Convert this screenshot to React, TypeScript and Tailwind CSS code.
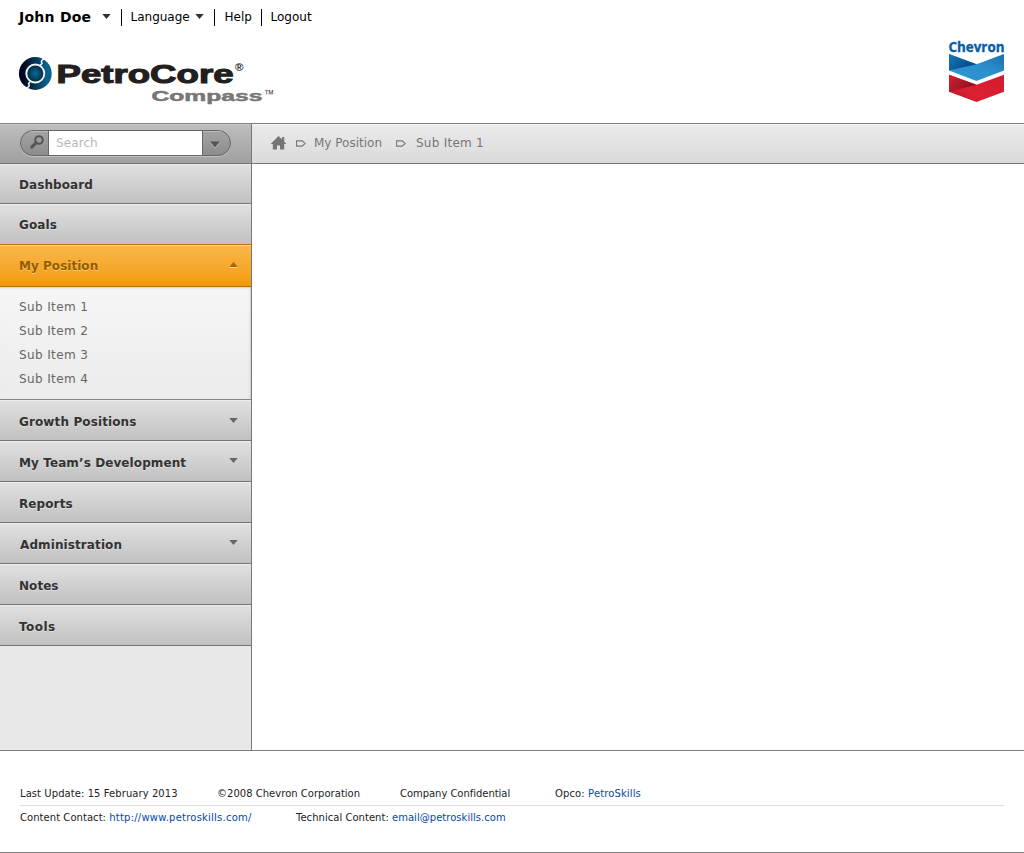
import React from "react";

type NavEntry = { label: string; arrow?: boolean; tracking?: string; height: string; nudge?: string };

const topEntries: NavEntry[] = [
  { label: "Dashboard", height: "h-10 pt-0.5", tracking: "tracking-[0.08px]" },
  { label: "Goals", height: "h-[41px] pt-px", tracking: "tracking-[0.1px]" },
];

const lowerEntries: NavEntry[] = [
  { label: "Growth Positions", arrow: true, tracking: "tracking-[0.12px]", height: "h-[41px] pt-1" },
  { label: "My Team’s Development", arrow: true, tracking: "tracking-[0.1px]", height: "h-[41px] pt-1", nudge: "mb-[5px]" },
  { label: "Reports", height: "h-[41px] pt-1", tracking: "tracking-[0.1px]" },
  { label: "Administration", arrow: true, height: "h-[41px] pt-1", tracking: "tracking-[0.1px] pl-px", nudge: "mb-[5px]" },
  { label: "Notes", height: "h-[41px] pt-1", tracking: "tracking-[0.05px]" },
  { label: "Tools", height: "h-[41px] pt-1", tracking: "tracking-[0.45px]" },
];

const subItems = ["Sub Item 1", "Sub Item 2", "Sub Item 3", "Sub Item 4"];

function Caret({ className }: { className: string }) {
  return (
    <svg width="9" height="5" viewBox="0 0 9 5" className={`shrink-0 ${className}`}>
      <path d="M0.3 0h8.4L4.5 5z" fill="currentColor" />
    </svg>
  );
}

function Pennant({ className }: { className: string }) {
  return (
    <svg width="10" height="7" viewBox="0 0 10 7" className={`shrink-0 text-[#777] ${className}`}>
      <path d="M0.5 0.9h5.7L9.2 3.5 6.2 6.1H0.5z" fill="none" stroke="currentColor" strokeWidth="1.1" />
    </svg>
  );
}

function NavRow({ label, arrow, tracking = "", height, nudge = "" }: NavEntry) {
  return (
    <a
      className={`flex ${height} items-center justify-between border-b border-[#747474] bg-linear-to-b from-[#e1e1e1] to-[#c1c1c1] pl-[19px] pr-[13px] shadow-[inset_0_1px_0_#ececec]`}
    >
      <span className={`text-[12px] font-bold leading-4 text-[#333] [text-shadow:0_1px_0_#ddd] ${tracking}`}>{label}</span>
      {arrow && <Caret className={`text-[#666] ${nudge || "mb-[3px]"}`} />}
    </a>
  );
}

function PetroCoreLogo() {
  return (
    <svg width="260" height="54" viewBox="18 54 260 54" className="block">
      <defs>
        <linearGradient id="rim" x1="0" y1="0.5" x2="1" y2="0.5">
          <stop offset="0.1" stopColor="#02051d" />
          <stop offset="0.5" stopColor="#073653" />
          <stop offset="0.85" stopColor="#08618e" />
        </linearGradient>
        <radialGradient id="core">
          <stop offset="0" stopColor="#087092" />
          <stop offset="0.95" stopColor="#062543" />
        </radialGradient>
      </defs>
      <circle cx="35.3" cy="73.5" r="16.4" fill="url(#rim)" />
      <circle cx="35.3" cy="73.5" r="9" fill="url(#core)" stroke="#eef5f7" strokeWidth="1.9" />
      <path
        d="M44.6 59c-2.8 0.6-4 2.2-2.6 4.4l-2 2.4M26 88c2.8-0.6 4-2.2 2.6-4.4l2-2.4"
        fill="none"
        stroke="#eef5f7"
        strokeWidth="1.6"
      />
      <text x="56.5" y="83" textLength="177" lengthAdjust="spacingAndGlyphs" fontFamily="Liberation Sans, Arial, sans-serif" fontWeight="700" fontSize="26" fill="#231f20" stroke="#231f20" strokeWidth="1.1">
        PetroCore
      </text>
      <text x="235" y="71" fontFamily="Liberation Sans, Arial, sans-serif" fontWeight="700" fontSize="11.5" fill="#222">®</text>
      <text x="151.5" y="101" textLength="111" lengthAdjust="spacingAndGlyphs" fontFamily="Liberation Sans, Arial, sans-serif" fontWeight="700" fontSize="15" fill="#777" stroke="#777" strokeWidth="0.5">
        Compass
      </text>
      <text x="264" y="98" textLength="10" lengthAdjust="spacingAndGlyphs" fontFamily="Liberation Sans, Arial, sans-serif" fontSize="12" fill="#444">™</text>
    </svg>
  );
}

function ChevronLogo() {
  return (
    <svg width="62" height="68" viewBox="946 36 62 68" className="block overflow-visible">
      <defs>
        <linearGradient id="blueBand" x1="0" y1="1" x2="1" y2="0">
          <stop offset="0" stopColor="#2b9cd8" />
          <stop offset="0.6" stopColor="#2b8dca" />
          <stop offset="1" stopColor="#1b6eb0" />
        </linearGradient>
        <linearGradient id="blueFold" x1="0" y1="0" x2="1" y2="0.6">
          <stop offset="0" stopColor="#147bbd" />
          <stop offset="1" stopColor="#07447e" />
        </linearGradient>
        <linearGradient id="redBand" x1="0" y1="0.9" x2="1" y2="0.1">
          <stop offset="0" stopColor="#b51627" />
          <stop offset="0.35" stopColor="#dd2034" />
          <stop offset="1" stopColor="#d31a2c" />
        </linearGradient>
        <linearGradient id="redFold" x1="0" y1="0" x2="1" y2="0.6">
          <stop offset="0" stopColor="#d91e30" />
          <stop offset="1" stopColor="#861220" />
        </linearGradient>
      </defs>
      <text x="948.5" y="52" textLength="56" lengthAdjust="spacingAndGlyphs" fontFamily="Open Sans, Noto Sans, sans-serif" fontWeight="700" fontSize="13.8" fill="#075ba5" stroke="#075ba5" strokeWidth="0.35">
        Chevron
      </text>
      <path d="M949 54l27.5 10.2L1004 54v16.5L976.5 81 949 70.5z" fill="url(#blueBand)" />
      <path d="M949 54l27.5 10.2L949 70.5z" fill="url(#blueFold)" />
      <path d="M949 74.7l27.5 10L1004 74.7v17L976.5 102 949 91.7z" fill="url(#redBand)" />
      <path d="M949 74.7l27.5 10L949 91.7z" fill="url(#redFold)" />
    </svg>
  );
}

function SearchBox() {
  return (
    <div className="mb-px flex h-[26px] w-[211px] overflow-hidden rounded-full border border-[#666] bg-linear-to-b from-[#a5a5a5] to-[#8c8c8c] shadow-[0_1px_0_#c2c2c2]">
      <button className="flex w-[28px] items-center justify-center border-r border-[#666] shadow-[inset_0_1px_0_#bbb]">
        <svg width="14" height="14" viewBox="0 0 14 14" className="ml-1 mb-0.5">
          <circle cx="9" cy="5" r="3.8" fill="none" stroke="#555" strokeWidth="2" />
          <path d="M6 7.9L1.8 12.1" stroke="#555" strokeWidth="3" strokeLinecap="round" />
        </svg>
      </button>
      <div className="flex flex-1 items-center bg-white pl-[7px] text-[12px] leading-4 tracking-[0.1px] text-[#b8b8b8]">Search</div>
      <button className="flex w-[28px] items-center border-l border-[#666] pl-[7px] pt-[3px] shadow-[inset_0_1px_0_#bbb]">
        <svg width="10" height="8" viewBox="0 0 10 8">
          <path d="M0 1.6h10L5 7.6z" fill="#c0c0c0" />
          <path d="M0 0.5h10L5 6.5z" fill="#555" />
        </svg>
      </button>
    </div>
  );
}

export default function App() {
  return (
    <div className="flex h-[853px] w-[1024px] flex-col overflow-hidden border-b border-[#808080] bg-white font-['DejaVu_Sans',Verdana,sans-serif] text-[12px] text-black">
      <header className="flex h-[123px] justify-between pl-[18px] pr-4">
        <div>
          <nav className="flex h-[34px] items-center pl-px leading-4">
            <span className="w-[73px] whitespace-nowrap text-[14px] font-bold tracking-[0.25px]">John Doe</span>
            <Caret className="ml-[10px] mb-0.5 text-[#333]" />
            <span className="ml-[10px] h-[17px] w-px bg-black" />
            <span className="ml-[8.5px] w-[59px]">Language</span>
            <Caret className="ml-[5.5px] mb-0.5 text-[#333]" />
            <span className="ml-[10px] h-[17px] w-px bg-black" />
            <span className="ml-[9.5px] w-[28px]">Help</span>
            <span className="ml-[8.5px] h-[17px] w-px bg-black" />
            <span className="ml-[8.5px]">Logout</span>
          </nav>
          <div className="pt-5">
            <PetroCoreLogo />
          </div>
        </div>
        <div className="pt-9">
          <ChevronLogo />
        </div>
      </header>

      <div className="flex h-[628px] border-y border-[#808080]">
        <aside className="w-[252px] shrink-0 border-r border-[#777] bg-[#e8e8e8]">
          <div className="flex h-10 items-center border-b border-[#747474] bg-linear-to-b from-[#bebebe] to-[#a0a0a0] pl-5 shadow-[inset_0_1px_0_#ccc]">
            <SearchBox />
          </div>
          {topEntries.map((entry) => (
            <NavRow key={entry.label} {...entry} />
          ))}
          <a className="relative -mt-px flex h-[43px] items-center justify-between border-y border-[#b87508] bg-linear-to-b from-[#fab849] to-[#f29a00] pl-[19px] pr-[13px] shadow-[inset_0_1px_0_#fdd793]">
            <span className="text-[12px] font-bold leading-4 tracking-[0.03px] text-[#935c00] [text-shadow:0_1px_0_#ffc965]">My Position</span>
            <svg width="9" height="6" viewBox="0 0 9 6" className="mb-px">
              <path d="M0.3 5h8.4L4.5 0z" fill="#a86800" />
              <path d="M0.5 5.5h8" stroke="#ffdb9a" />
            </svg>
          </a>
          <ul className="flex h-[113px] flex-col border-b border-[#858585] bg-linear-to-b from-[#f6f6f6] to-[#ebebeb] pl-[19px] pt-2 shadow-[inset_-1px_1px_2px_#ccc]">
            {subItems.map((item) => (
              <li key={item} className="h-6 text-[12px] leading-6 tracking-[0.38px] text-[#666]">
                {item}
              </li>
            ))}
          </ul>
          {lowerEntries.map((entry) => (
            <NavRow key={entry.label} {...entry} />
          ))}
        </aside>

        <main className="flex-1 bg-white">
          <div className="flex h-10 items-center border-b border-[#777] bg-linear-to-b from-[#ebebeb] to-[#dadada] pl-[18px] text-[#777] shadow-[inset_0_1px_0_#f5f5f5]">
            <svg width="17" height="14" viewBox="0 0 17 14" className="mb-0.5">
              <path d="M8.5 0L0.6 8h2.2v5.5h4.2V9.4h3v4.1h4.2V8h2.2l-2.2-2.4V1h-2.1v2.4z" fill="#757575" />
            </svg>
            <Pennant className="ml-[9px]" />
            <span className="ml-2 w-[69px] whitespace-nowrap pb-0.5 leading-4">My Position</span>
            <Pennant className="ml-[13px]" />
            <span className="ml-[10px] whitespace-nowrap pb-0.5 leading-4 tracking-[0.25px]">Sub Item 1</span>
          </div>
        </main>
      </div>

      <footer className="px-5 pt-[31px] text-[10px] leading-[23px] text-[#222]">
        <div className="flex h-6 whitespace-nowrap border-b border-[#ddd]">
          <span className="w-[197px] tracking-[0.07px]">Last Update: 15 February 2013</span>
          <span className="w-[183px] tracking-[0.02px]">©2008 Chevron Corporation</span>
          <span className="w-[155px] tracking-[-0.04px]">Company Confidential</span>
          <span className="tracking-[0.12px]">
            Opco: <a className="text-[#0449a8]">PetroSkills</a>
          </span>
        </div>
        <div className="flex whitespace-nowrap">
          <span className="w-[276px] tracking-[0.05px]">
            Content Contact: <a className="tracking-[0.22px] text-[#0449a8]">http://www.petroskills.com/</a>
          </span>
          <span className="tracking-[0.03px]">
            Technical Content: <a className="text-[#0449a8]">email@petroskills.com</a>
          </span>
        </div>
      </footer>
    </div>
  );
}
